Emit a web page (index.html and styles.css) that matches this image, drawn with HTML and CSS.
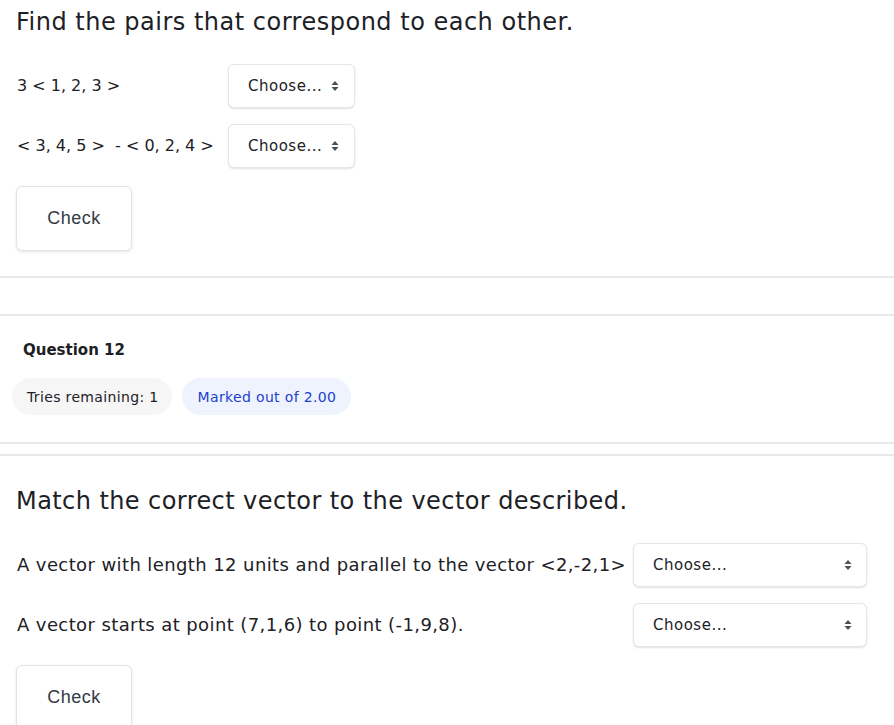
FILE: index.html
```html
<!DOCTYPE html>
<html>
<head>
<meta charset="utf-8">
<link rel="stylesheet" href="styles.css">
</head>
<body>
<div class="page">
  <section class="qtext first">
    <h2 class="prompt">Find the pairs that correspond to each other.</h2>
    <div class="pairs pairs-a">
      <div class="label">3 &lt; 1, 2, 3 &gt;</div>
      <div class="select sel-a"><span class="sel-text">Choose...</span><svg class="arrows" width="8" height="12" viewBox="0 0 8 12"><path d="M4 1 L7.5 5 L0.5 5 Z M4 11 L7.5 7 L0.5 7 Z" fill="#495057"/></svg></div>
      <div class="label">&lt; 3, 4, 5 &gt; &nbsp;- &lt; 0, 2, 4 &gt;</div>
      <div class="select sel-a"><span class="sel-text">Choose...</span><svg class="arrows" width="8" height="12" viewBox="0 0 8 12"><path d="M4 1 L7.5 5 L0.5 5 Z M4 11 L7.5 7 L0.5 7 Z" fill="#495057"/></svg></div>
    </div>
    <button class="check">Check</button>
  </section>
  <hr class="rule rule-a">
  <hr class="rule rule-b">
  <section class="info">
    <h3 class="qno">Question 12</h3>
    <div class="badges">
      <span class="badge tries">Tries remaining: 1</span>
      <span class="badge marks">Marked out of 2.00</span>
    </div>
  </section>
  <hr class="rule rule-c">
  <hr class="rule rule-d">
  <section class="qtext second">
    <h2 class="prompt prompt-b">Match the correct vector to the vector described.</h2>
    <div class="pairs pairs-b">
      <div class="label">A vector with length 12 units and parallel to the vector &lt;2,-2,1&gt;</div>
      <div class="select sel-b"><span class="sel-text">Choose...</span><svg class="arrows" width="8" height="12" viewBox="0 0 8 12"><path d="M4 1 L7.5 5 L0.5 5 Z M4 11 L7.5 7 L0.5 7 Z" fill="#495057"/></svg></div>
      <div class="label">A vector starts at point (7,1,6) to point (-1,9,8).</div>
      <div class="select sel-b"><span class="sel-text">Choose...</span><svg class="arrows" width="8" height="12" viewBox="0 0 8 12"><path d="M4 1 L7.5 5 L0.5 5 Z M4 11 L7.5 7 L0.5 7 Z" fill="#495057"/></svg></div>
    </div>
    <button class="check">Check</button>
  </section>
</div>
</body>
</html>
```
FILE: styles.css
```css
html, body {
  margin: 0;
  padding: 0;
  background: #ffffff;
}
body {
  font-family: "DejaVu Sans", "Open Sans", sans-serif;
  color: #1d2125;
}
.page {
  display: flex;
  flex-direction: column;
}
.qtext {
  padding: 0 0 0 16px;
  display: flex;
  flex-direction: column;
  align-items: flex-start;
}
.qtext.first {
  padding-top: 6px;
}
.prompt {
  margin: 0;
  font-weight: 400;
  font-size: 24px;
  letter-spacing: 0.5px;
  line-height: 32px;
}
.prompt-b {
  letter-spacing: 0.42px;
}
.pairs {
  display: grid;
  row-gap: 16px;
  margin-top: 26px;
  align-items: center;
}
.pairs-a {
  grid-template-columns: 212px 127px;
}
.pairs-a .label {
  font-size: 16px;
}
.pairs-b {
  grid-template-columns: 617px 234px;
  margin-top: 26px;
}
.pairs-b .label {
  font-size: 18px;
  letter-spacing: 0.4px;
}
.label {
  line-height: 24px;
  padding-left: 1px;
  white-space: nowrap;
}
.select {
  box-sizing: border-box;
  height: 44px;
  border: 1px solid #e6e6e6;
  border-radius: 6px;
  box-shadow: 0 1px 2px rgba(0, 0, 0, 0.12);
  background: #fff;
  display: flex;
  align-items: center;
  justify-content: space-between;
  padding: 0 15px 0 19px;
}
.sel-text {
  font-size: 15px;
  letter-spacing: 0.5px;
  color: #1d2125;
}
.sel-b {
  padding-right: 14px;
}
.arrows {
  display: block;
}
.check {
  margin-top: 18px;
  width: 116px;
  height: 65px;
  box-sizing: border-box;
  background: #fff;
  border: 1px solid #e1e4ec;
  border-radius: 6px;
  box-shadow: 0 1px 3px rgba(0, 0, 0, 0.1);
  font-family: "Liberation Sans", Arial, sans-serif;
  font-size: 18px;
  letter-spacing: 0.5px;
  color: #333a44;
  padding: 0;
}
.rule {
  margin: 0;
  border: 0;
  height: 2px;
  background: #e8e8e8;
}
.rule-a {
  margin-top: 25px;
}
.rule-b {
  margin-top: 36px;
}
.info {
  padding: 22px 0 0 12px;
}
.qno {
  margin: 0 0 0 11px;
  font-size: 15px;
  line-height: 24px;
  font-weight: 700;
}
.badges {
  display: flex;
  gap: 10px;
  margin-top: 16px;
}
.badge {
  display: inline-flex;
  align-items: center;
  height: 37px;
  border-radius: 19px;
  padding: 0 13px 0 15px;
  font-size: 14px;
  letter-spacing: 0.35px;
}
.tries {
  background: #f6f6f6;
  color: #1d2125;
}
.marks {
  background: #eef3fd;
  color: #1e3fce;
  padding: 0 15px 0 16px;
}
.rule-c {
  margin-top: 27px;
}
.rule-d {
  margin-top: 10px;
}
.qtext.second {
  padding-top: 29px;
}
```
